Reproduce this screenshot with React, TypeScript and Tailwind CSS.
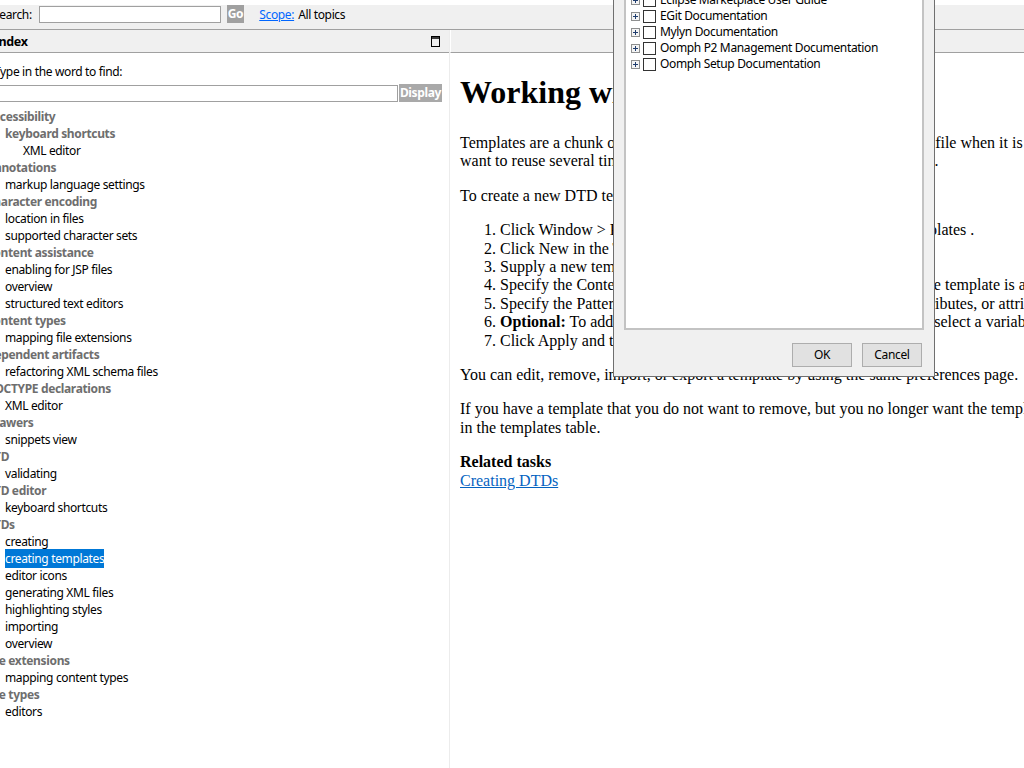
import React from "react";

const ui = "font-['Noto_Sans',sans-serif] tracking-[-0.35px]";
const serif = "font-['Liberation_Serif',serif] tracking-normal";

type Row = { t: string; l: number; p?: boolean; sel?: boolean };

const rows: Row[] = [
  { t: "Accessibility", l: 0, p: true },
  { t: "keyboard shortcuts", l: 1, p: true },
  { t: "XML editor", l: 2 },
  { t: "Annotations", l: 0, p: true },
  { t: "markup language settings", l: 1 },
  { t: "Character encoding", l: 0, p: true },
  { t: "location in files", l: 1 },
  { t: "supported character sets", l: 1 },
  { t: "Content assistance", l: 0, p: true },
  { t: "enabling for JSP files", l: 1 },
  { t: "overview", l: 1 },
  { t: "structured text editors", l: 1 },
  { t: "Content types", l: 0, p: true },
  { t: "mapping file extensions", l: 1 },
  { t: "Dependent artifacts", l: 0, p: true },
  { t: "refactoring XML schema files", l: 1 },
  { t: "DOCTYPE declarations", l: 0, p: true },
  { t: "XML editor", l: 1 },
  { t: "Drawers", l: 0, p: true },
  { t: "snippets view", l: 1 },
  { t: "DTD", l: 0, p: true },
  { t: "validating", l: 1 },
  { t: "DTD editor", l: 0, p: true },
  { t: "keyboard shortcuts", l: 1 },
  { t: "DTDs", l: 0, p: true },
  { t: "creating", l: 1 },
  { t: "creating templates", l: 1, sel: true },
  { t: "editor icons", l: 1 },
  { t: "generating XML files", l: 1 },
  { t: "highlighting styles", l: 1 },
  { t: "importing", l: 1 },
  { t: "overview", l: 1 },
  { t: "File extensions", l: 0, p: true },
  { t: "mapping content types", l: 1 },
  { t: "File types", l: 0, p: true },
  { t: "editors", l: 1 },
];

const treeItems = [
  "Eclipse Marketplace User Guide",
  "EGit Documentation",
  "Mylyn Documentation",
  "Oomph P2 Management Documentation",
  "Oomph Setup Documentation",
];

function Expander() {
  return (
    <svg width="9" height="9" viewBox="0 0 9 9" className="shrink-0">
      <rect x="0.5" y="0.5" width="8" height="8" fill="#f4f4f4" stroke="#8e8f8f" />
      <path d="M2 4.5h5M4.5 2v5" stroke="#1f3d6e" strokeWidth="1" />
    </svg>
  );
}

export default function App() {
  return (
    <div className={`relative w-[1024px] h-[768px] overflow-hidden bg-white ${ui} text-[12px] text-black`}>
      {/* top white strip */}
      <div className="h-[5px] bg-white" />
      {/* toolbar */}
      <div className="h-[25px] bg-[#f0f0f0] border-b border-[#a0a0a0] flex items-start">
        <div className="flex items-center h-[18px] ml-[-7px]">
          <span className="leading-[18px] mt-[1px]">Search:</span>
          <input
            className="ml-[7px] w-[182px] h-[17px] bg-white border border-[#a0a0a0] outline-none"
            readOnly
          />
          <span className="ml-[6px] h-[18px] px-[1px] bg-[#a0a0a0] text-white font-bold leading-[18px]">Go</span>
          <a className="ml-[15px] mt-[1px] text-[#0066ff] underline leading-[18px]">Scope:</a>
          <span className="ml-[4px] mt-[1px] leading-[18px]">All topics</span>
        </div>
      </div>
      {/* main */}
      <div className="flex h-[738px]">
        {/* left panel */}
        <div className="w-[449px] shrink-0 flex flex-col">
          <div className="h-[23px] bg-[#f0f0f0] border-b border-[#a0a0a0] flex items-center justify-between">
            <span className="ml-[-6px] mt-[2px] font-bold text-[12.5px]">Index</span>
            <svg width="9" height="11" viewBox="0 0 9 11" className="mr-[9px]">
              <rect x="0.5" y="0.5" width="8" height="10" fill="none" stroke="#000" />
              <path d="M0.5 2h8" stroke="#000" strokeWidth="1.5" />
            </svg>
          </div>
          <div className="pt-[11px] ml-[-6px]">
            <div className="leading-[16px]">Type in the word to find:</div>
          </div>
          <div className="mt-[4px] flex items-center">
            <input className="ml-[-4px] w-[402px] h-[17px] bg-white border border-[#a0a0a0] outline-none" readOnly />
            <span className="ml-[1px] h-[18px] w-[43px] bg-[#a9a9a9] text-white font-bold leading-[18px] text-center">Display</span>
          </div>
          <div className="mt-[6px] ml-[-14px]">
            {rows.map((r, i) => (
              <div
                key={i}
                className={`h-[17px] leading-[17px] whitespace-nowrap ${
                  r.l === 0 ? "pl-0" : r.l === 1 ? "pl-[19px]" : "pl-[37px]"
                } ${r.p ? "font-bold text-[#6e6e6e]" : "text-black"}`}
              >
                {r.sel ? (
                  <span className="bg-[#0078d7] text-white py-[1px]">{r.t}</span>
                ) : (
                  r.t
                )}
              </div>
            ))}
          </div>
        </div>
        {/* right content */}
        <div className="flex-1 flex flex-col border-l border-[#ececec] min-w-0">
          <div className="h-[23px] bg-[#f0f0f0] border-b border-[#a0a0a0] border-l border-l-white" />
          <div className={`${serif} text-[16px] leading-[18.4px] pl-[10px] whitespace-nowrap overflow-hidden`}>
            <h1 className="text-[32px] font-bold leading-[37px] mt-[21px] mb-[23px]">
              Working with DTD templates
            </h1>
            <p className="mb-[16px]">
              Templates are a chunk of pre-defined code that you can insert into a DTD file when it is created. You may find a template useful when you have a certain piece of code you
              <br />
              want to reuse several times, and you do not want to write it out every time.
            </p>
            <p className="mb-[16px]">To create a new DTD template, complete the following steps:</p>
            <ol className="list-decimal pl-[40px] mb-[16px]">
              <li>Click Window &gt; Preferences and choose XML &gt; DTD Files &gt; Templates .</li>
              <li>Click New in the Templates preference page.</li>
              <li>Supply a new template Name and Description .</li>
              <li>Specify the Context for the template. This is the context in which the template is available in the proposal list when content assist is requested.</li>
              <li>Specify the Pattern for your template using the appropriate tags, attributes, or attribute values to be inserted by content assist.</li>
              <li>
                <b>Optional:</b> To add a variable to a template, click Insert Variable and select a variable from the list.
              </li>
              <li>Click Apply and then OK to save your changes.</li>
            </ol>
            <p className="mb-[16px]">You can edit, remove, import, or export a template by using the same preferences page.</p>
            <p className="mb-[16px]">
              If you have a template that you do not want to remove, but you no longer want the template to appear in the content assist list, clear its check box
              <br />
              in the templates table.
            </p>
            <p>
              <b>Related tasks</b>
              <br />
              <a className="text-[#0563c1] underline">Creating DTDs</a>
            </p>
          </div>
        </div>
      </div>

      {/* overlay dialog */}
      <div className="absolute left-[613px] top-0 w-[322px] h-[377px] bg-[#f0f0f0] border-x border-b border-[#6f6f6f] flex flex-col">
        <div className="ml-[10px] w-[300px] h-[330px] bg-white border-2 border-t-0 border-[#c3c3c3] overflow-hidden">
          <div className="mt-[-8px] pl-[5px]">
            {treeItems.map((t) => (
              <div key={t} className="h-[16px] flex items-center">
                <Expander />
                <span className="ml-[3px] w-[13px] h-[13px] border border-[#333] bg-white shrink-0" />
                <span className="ml-[4px] leading-[16px] whitespace-nowrap">{t}</span>
              </div>
            ))}
          </div>
        </div>
        <div className="flex justify-end gap-[10px] mt-[13px] pr-[12px]">
          <button className="w-[60px] h-[24px] bg-[#e1e1e1] border border-[#adadad] text-[12px]">OK</button>
          <button className="w-[60px] h-[24px] bg-[#e1e1e1] border border-[#adadad] text-[12px]">Cancel</button>
        </div>
      </div>
    </div>
  );
}
